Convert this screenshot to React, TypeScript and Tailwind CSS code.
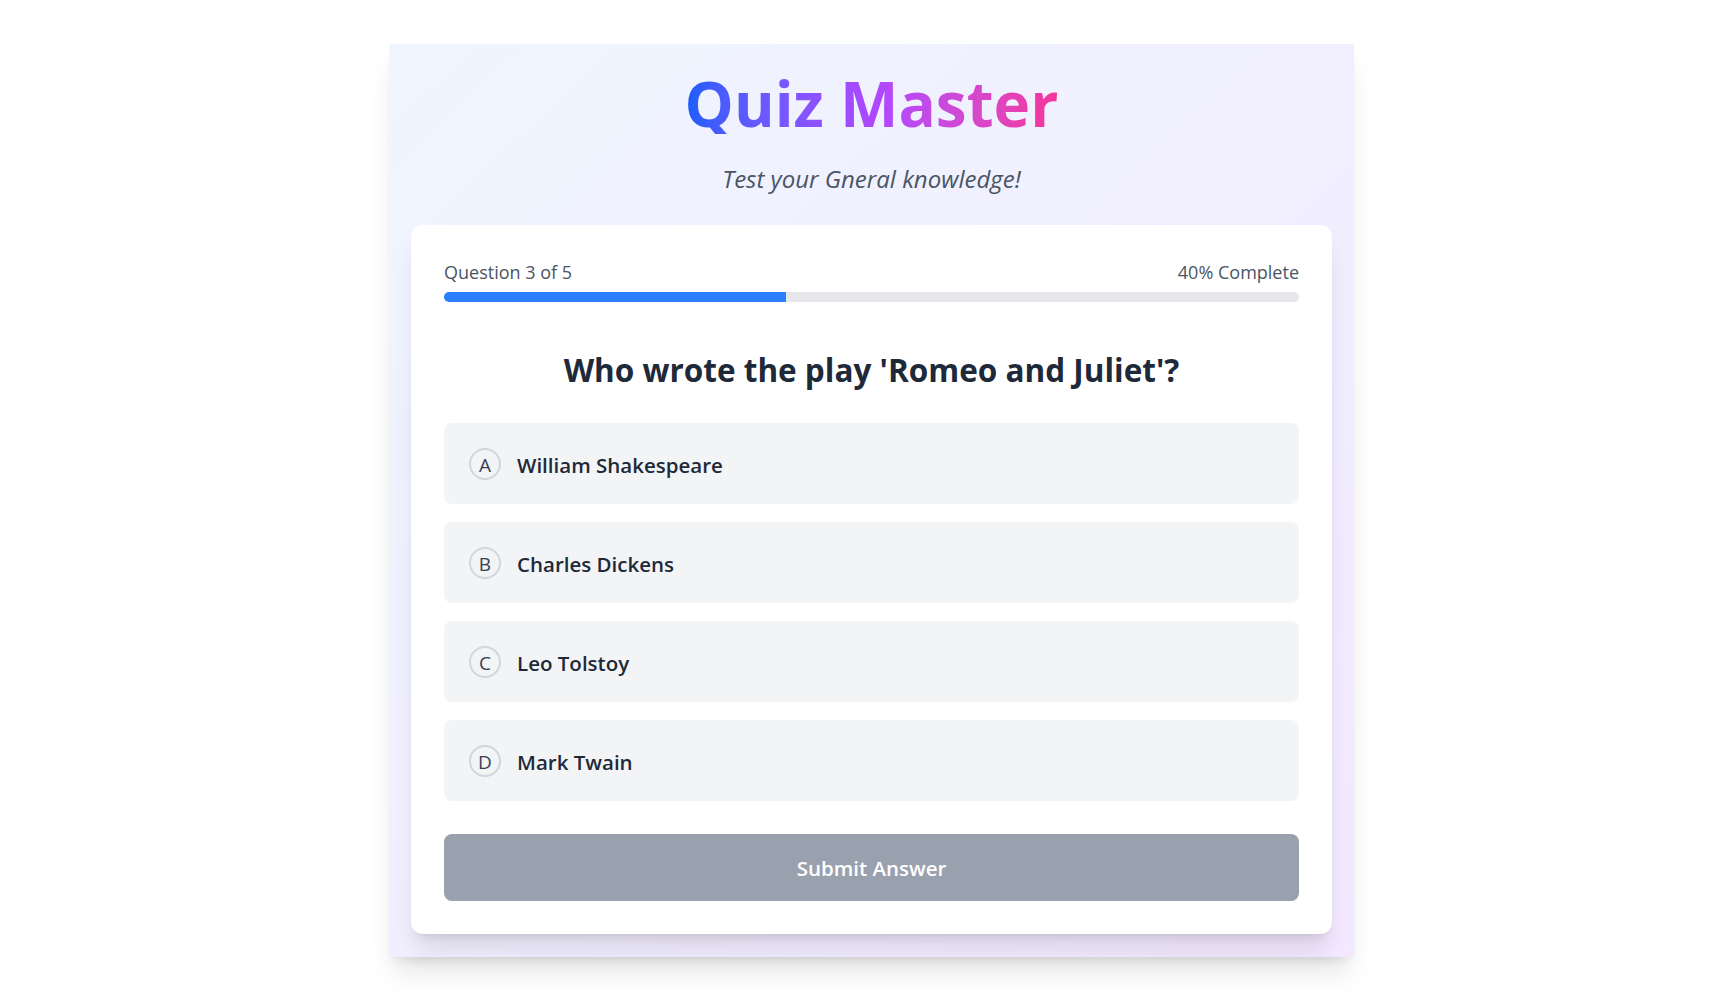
import React from "react";

const options = [
  { letter: "A", text: "William Shakespeare" },
  { letter: "B", text: "Charles Dickens" },
  { letter: "C", text: "Leo Tolstoy" },
  { letter: "D", text: "Mark Twain" },
];

export default function App() {
  return (
    <div
      className="min-h-screen bg-white flex justify-center pl-[21px] pt-[44px] pb-[43px]"
      style={{ fontFamily: "'Open Sans', 'Noto Sans', sans-serif" }}
    >
      <div className="w-[965px] bg-linear-to-br from-blue-50 to-purple-100 shadow-xl px-[22px] pt-[28px] pb-[23px]">
        <div className="text-center">
          <h1 className="inline-block text-[62px] leading-[62px] font-bold bg-linear-to-r from-blue-600 via-purple-500 to-pink-500 bg-clip-text text-transparent">
            Quiz Master
          </h1>
        </div>
        <p className="mt-[29px] text-center text-2xl leading-8 italic text-gray-600">
          Test your Gneral knowledge!
        </p>
        <div className="mt-[30px] bg-white rounded-xl shadow-xl p-[33px]">
          <div className="flex justify-between text-lg leading-7 text-gray-600">
            <span>Question 3 of 5</span>
            <span>40% Complete</span>
          </div>
          <div className="mt-[6px] h-2.5 bg-gray-200 rounded-full overflow-hidden">
            <div className="h-full bg-blue-500" style={{ width: "40%" }} />
          </div>
          <h2 className="mt-[50px] text-center text-[31.5px] leading-9 font-bold text-gray-800">
            Who wrote the play 'Romeo and Juliet'?
          </h2>
          <div className="mt-[35px] flex flex-col gap-[18px]">
            {options.map((o) => (
              <div
                key={o.letter}
                className="h-[81px] flex items-center px-[25px] bg-gray-100 rounded-lg"
              >
                <span className="w-8 h-8 pt-[3px] rounded-full border-2 border-gray-300 flex items-center justify-center text-[19px] leading-none text-gray-700 mr-4 shrink-0">
                  {o.letter}
                </span>
                <span className="text-[20.5px] leading-7 pt-[2px] font-semibold text-gray-800">
                  {o.text}
                </span>
              </div>
            ))}
          </div>
          <button className="mt-[33px] w-full h-[67px] pt-[2px] rounded-lg bg-gray-400 text-white text-[20.5px] font-semibold">
            Submit Answer
          </button>
        </div>
      </div>
    </div>
  );
}
